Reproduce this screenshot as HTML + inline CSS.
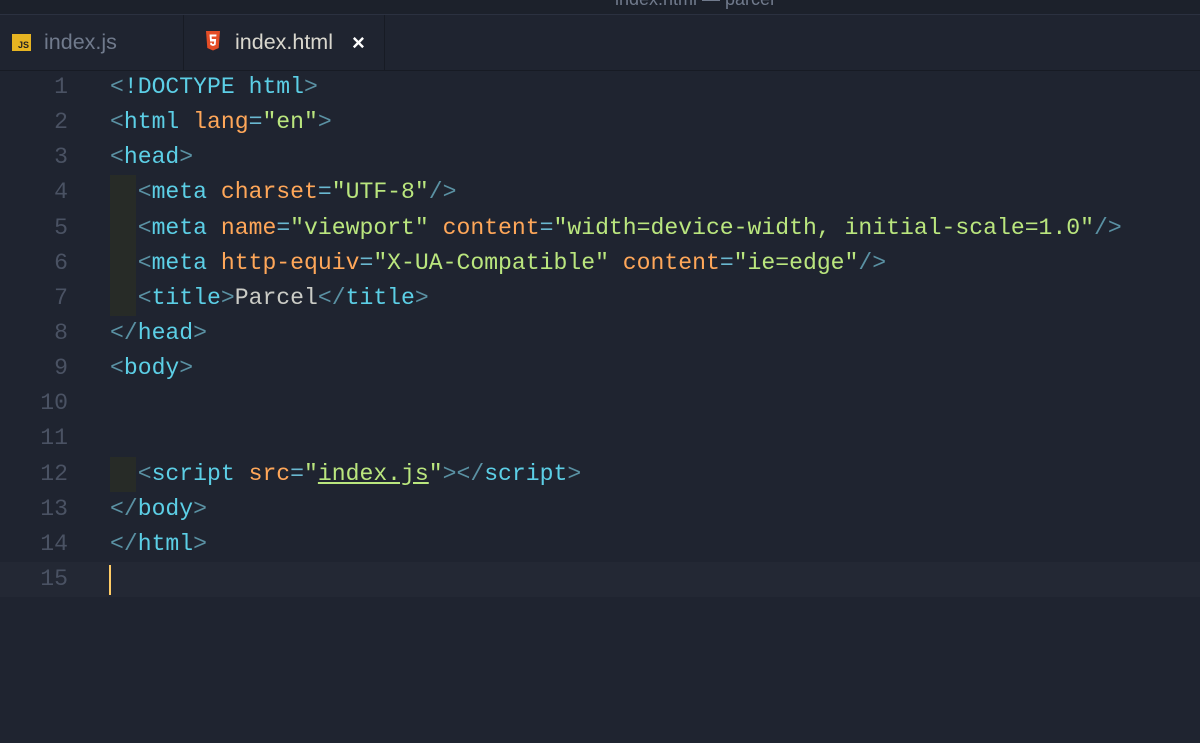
<!DOCTYPE html>
<html><head><meta charset="utf-8"><style>
body{margin:0;width:1200px;height:743px;background:#1f2430;overflow:hidden;font-family:"Liberation Sans",sans-serif;position:relative}
.title{position:absolute;left:0;top:0;width:1200px;height:14px;background:#1c212b;border-bottom:1px solid #2b3140;overflow:hidden}
.title span{position:absolute;left:615px;top:-11px;color:#707a8c;font-size:18px}
.tabs{position:absolute;top:15px;left:0;width:1200px;height:55px;border-bottom:1px solid #171b24;background:#1f2430}
.tab{position:absolute;top:0;height:55px;border-right:1px solid #171b24;font-size:21.5px;line-height:55px}
.code{position:absolute;left:0;top:70px;width:1200px;font-family:"Liberation Mono",monospace;font-size:23.1px}
.ln{height:35.15px;line-height:35.15px;position:relative;white-space:pre}
.n{position:absolute;right:1132px;color:#4a5263}
.t{position:absolute;left:110px;color:#cbccc6}
.p{color:#5a91a3}.g{color:#5ccfe6}.a{color:#ffa759}.o{color:#6ab8d0}.s{color:#bae67e}.x{color:#cbccc6}
.ind{position:absolute;left:110px;top:0;width:26px;height:35.15px;background:#272b27}
</style></head><body>
<div class="title"><span>index.html — parcel</span></div>
<div class="tabs">
<div class="tab" style="left:0;width:183px;color:#707a8c"><span style="position:absolute;left:12px;top:19px;width:19px;height:17px;background:#e6b422;color:#222;font-size:9px;line-height:22px;text-align:right;padding-right:2px;box-sizing:border-box;font-weight:bold">JS</span><span style="position:absolute;left:44px">index.js</span></div>
<div class="tab" style="left:184px;width:200px;color:#d9d7ce"><svg style="position:absolute;left:22px;top:16px" width="14" height="20" viewBox="0 0 14 20"><path d="M0 0h14l-1.3 17L7 19.5 1.3 17z" fill="#e44d26"/><path d="M3.5 3.5h7l-.2 2H5.6l.2 2.5h4.3l-.5 6-2.6 1-2.6-1-.2-2.2h1.8l.1 1 .9.3 1-.3.2-2.3H4.1z" fill="#fff"/></svg><span style="position:absolute;left:51px">index.html</span><span style="position:absolute;left:168px;font-size:22px;font-weight:bold;color:#fff">×</span></div>
</div>
<div class="code">
<div class="ln"><span class="n">1</span><span class="t"><span class="p">&lt;</span><span class="g">!DOCTYPE html</span><span class="p">&gt;</span></span></div>
<div class="ln"><span class="n">2</span><span class="t"><span class="p">&lt;</span><span class="g">html</span> <span class="a">lang</span><span class="o">=</span><span class="s">"en"</span><span class="p">&gt;</span></span></div>
<div class="ln"><span class="n">3</span><span class="t"><span class="p">&lt;</span><span class="g">head</span><span class="p">&gt;</span></span></div>
<div class="ln"><span class="ind"></span><span class="n">4</span><span class="t">  <span class="p">&lt;</span><span class="g">meta</span> <span class="a">charset</span><span class="o">=</span><span class="s">"UTF-8"</span><span class="p">/&gt;</span></span></div>
<div class="ln"><span class="ind"></span><span class="n">5</span><span class="t">  <span class="p">&lt;</span><span class="g">meta</span> <span class="a">name</span><span class="o">=</span><span class="s">"viewport"</span> <span class="a">content</span><span class="o">=</span><span class="s">"width=device-width, initial-scale=1.0"</span><span class="p">/&gt;</span></span></div>
<div class="ln"><span class="ind"></span><span class="n">6</span><span class="t">  <span class="p">&lt;</span><span class="g">meta</span> <span class="a">http-equiv</span><span class="o">=</span><span class="s">"X-UA-Compatible"</span> <span class="a">content</span><span class="o">=</span><span class="s">"ie=edge"</span><span class="p">/&gt;</span></span></div>
<div class="ln"><span class="ind"></span><span class="n">7</span><span class="t">  <span class="p">&lt;</span><span class="g">title</span><span class="p">&gt;</span><span class="x">Parcel</span><span class="p">&lt;/</span><span class="g">title</span><span class="p">&gt;</span></span></div>
<div class="ln"><span class="n">8</span><span class="t"><span class="p">&lt;/</span><span class="g">head</span><span class="p">&gt;</span></span></div>
<div class="ln"><span class="n">9</span><span class="t"><span class="p">&lt;</span><span class="g">body</span><span class="p">&gt;</span></span></div>
<div class="ln"><span class="n">10</span></div>
<div class="ln"><span class="n">11</span></div>
<div class="ln"><span class="ind"></span><span class="n">12</span><span class="t">  <span class="p">&lt;</span><span class="g">script</span> <span class="a">src</span><span class="o">=</span><span class="s">"<u>index.js</u>"</span><span class="p">&gt;&lt;/</span><span class="g">script</span><span class="p">&gt;</span></span></div>
<div class="ln"><span class="n">13</span><span class="t"><span class="p">&lt;/</span><span class="g">body</span><span class="p">&gt;</span></span></div>
<div class="ln"><span class="n">14</span><span class="t"><span class="p">&lt;/</span><span class="g">html</span><span class="p">&gt;</span></span></div>
<div class="ln" style="background:#232834"><span class="n">15</span><span style="position:absolute;left:109px;top:3px;width:2px;height:30px;background:#ffcc66"></span></div>
</div>
</body></html>
